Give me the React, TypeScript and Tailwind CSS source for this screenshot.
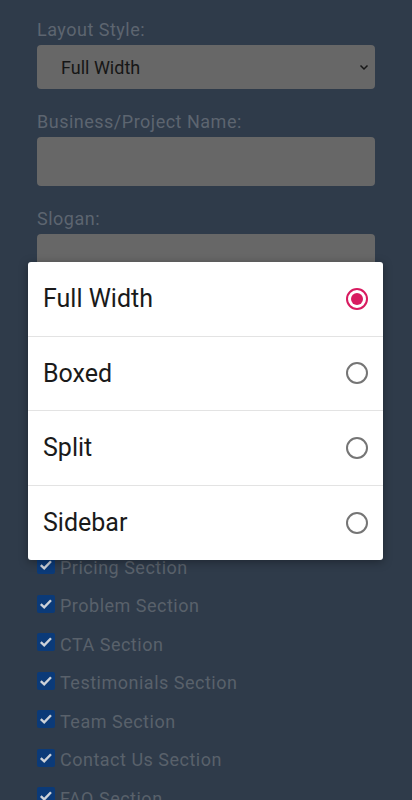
const options = [
  { label: "Full Width", selected: true },
  { label: "Boxed", selected: false },
  { label: "Split", selected: false },
  { label: "Sidebar", selected: false },
];

const sections = [
  "Pricing Section",
  "Problem Section",
  "CTA Section",
  "Testimonials Section",
  "Team Section",
  "Contact Us Section",
  "FAQ Section",
];

function Radio({ selected }: { selected: boolean }) {
  if (selected) {
    return (
      <span className="flex h-[22px] w-[22px] items-center justify-center rounded-full border-2 border-[#d81b60]">
        <span className="h-[12px] w-[12px] rounded-full bg-[#d81b60]" />
      </span>
    );
  }
  return <span className="h-[22px] w-[22px] rounded-full border-2 border-[#757575]" />;
}

export default function App() {
  return (
    <main
      className="relative h-[800px] w-[412px] overflow-hidden bg-[#2f3b4a] px-[37px] pt-[18px]"
      style={{ fontFamily: "Roboto, 'Noto Sans', sans-serif" }}
    >
      <label className="block h-6 text-[18px] leading-6 tracking-[0.5px] text-[#5d6570]">
        Layout Style:
      </label>
      <div className="mt-[3px] flex h-[44px] items-center justify-between rounded-[4px] bg-[#676767] pl-6 pr-[5px]">
        <span className="text-[18px] text-[#161616]">Full Width</span>
        <svg width="12" height="12" viewBox="0 0 12 12" className="text-[#161616]">
          <path d="M2.5 4.5 L6 8 L9.5 4.5" fill="none" stroke="currentColor" strokeWidth="1.5" />
        </svg>
      </div>

      <label className="mt-[21px] block h-6 text-[18px] leading-6 tracking-[0.5px] text-[#5d6570]">
        Business/Project Name:
      </label>
      <div className="mt-[3px] h-[49px] rounded-[4px] bg-[#676767]" />

      <label className="mt-[21px] block h-6 text-[18px] leading-6 tracking-[0.5px] text-[#5d6570]">
        Slogan:
      </label>
      <div className="mt-[3px] h-[49px] rounded-[4px] bg-[#676767]" />

      <div className="mt-[265px] flex flex-col">
        {sections.map((s) => (
          <div key={s} className="flex h-[38.5px] items-center gap-[5px]">
            <span className="-mt-[4px] flex h-[18px] w-[18px] items-center justify-center rounded-[2px] bg-[#0b3a78]">
              <svg width="16" height="16" viewBox="0 0 16 16">
                <path d="M2.8 8.2 L6.2 11.4 L13 4.2" fill="none" stroke="#cdd2d9" strokeWidth="2.4" />
              </svg>
            </span>
            <span className="text-[18px] tracking-[0.5px] text-[#59616b]">{s}</span>
          </div>
        ))}
      </div>

      <div className="absolute left-[28px] top-[262px] w-[355px] rounded-[3px] bg-white shadow-[0_2px_10px_rgba(0,0,0,0.35)]">
        {options.map((o, i) => (
          <div
            key={o.label}
            className={`flex h-[74.5px] items-center justify-between pl-[15px] pr-[15px] ${
              i < options.length - 1 ? "border-b border-[#e3e3e3]" : ""
            }`}
          >
            <span className="text-[25px] text-[#1a1a1a]">{o.label}</span>
            <Radio selected={o.selected} />
          </div>
        ))}
      </div>
    </main>
  );
}
